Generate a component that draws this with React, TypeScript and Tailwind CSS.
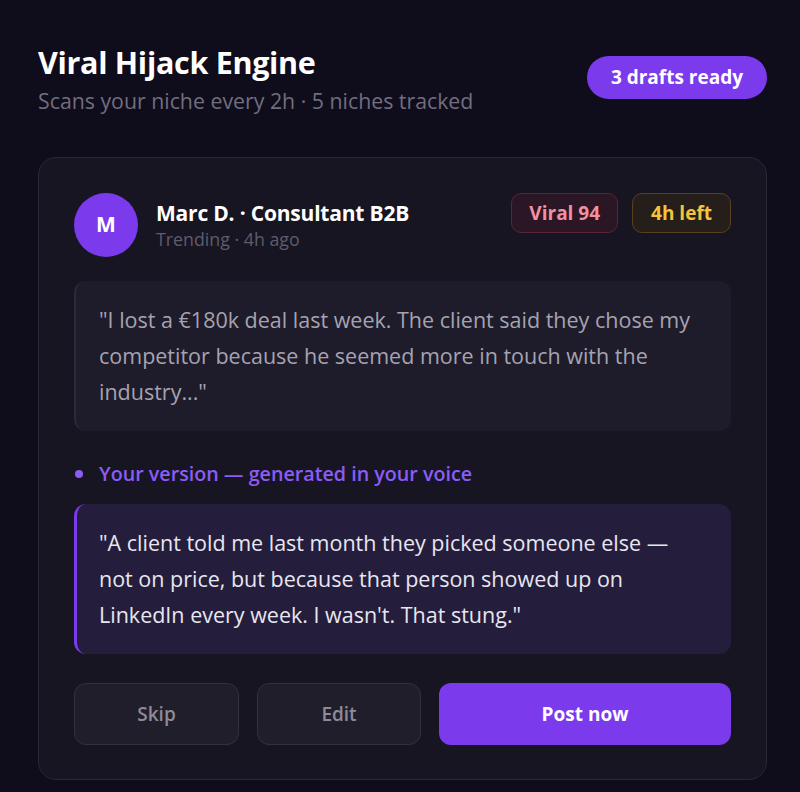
export default function App() {
  return (
    <div className="min-h-[792px] bg-[#0f0c1c] pl-[38px] pr-[33px] pt-[44px] pb-[12px] text-white" style={{ fontFamily: '"Open Sans", "Noto Sans", sans-serif' }}>
      <div className="flex items-start justify-between">
        <div>
          <h1 className="text-[30.5px] font-bold leading-[36px] tracking-[-0.3px]">Viral Hijack Engine</h1>
          <p className="mt-[7px] text-[21.3px] leading-[28px] text-[#716e7e]">Scans your niche every 2h · 5 niches tracked</p>
        </div>
        <div className="mt-[12px] flex h-[43px] items-center rounded-full bg-[#7c3aed] px-[24px] text-[19px] font-bold">3 drafts ready</div>
      </div>

      <div className="mt-[42px] rounded-[18px] border border-[#2a2736] bg-[#171522] px-[35px] pt-[35px] pb-[34px]">
        <div className="flex items-center">
          <div className="flex h-[64px] w-[64px] items-center justify-center rounded-full bg-[#7c3aed] text-[21px] font-bold">M</div>
          <div className="ml-[18px] flex-1">
            <div className="text-[21px] font-bold leading-[28px] tracking-[-0.2px]">Marc D. · Consultant B2B</div>
            <div className="text-[17.8px] leading-[24px] text-[#5f5c6c]">Trending · 4h ago</div>
          </div>
          <div className="flex gap-[14px] self-start">
            <span className="flex h-[40px] items-center rounded-[10px] border border-[#5a2534] bg-[#2a1624] px-[17px] text-[19px] font-bold text-[#f2909f]">Viral 94</span>
            <span className="flex h-[40px] items-center rounded-[10px] border border-[#59411d] bg-[#251e1a] px-[18px] text-[19px] font-bold text-[#f4c53c]">4h left</span>
          </div>
        </div>

        <div className="mt-[24px] rounded-[12px] border-l-[2px] border-[#2c2939] bg-[#1e1b2a] py-[21px] pl-[23px] pr-[24px] text-[21.5px] leading-[36px] text-[#a6a3b1]">
          "I lost a €180k deal last week. The client said they chose my competitor because he seemed more in touch with the industry..."
        </div>

        <div className="mt-[29px] flex items-center gap-[16px] text-[19.7px] font-semibold leading-[28px] text-[#8b5cf6]">
          <span className="ml-[1px] h-[8px] w-[8px] rounded-full bg-[#8b5cf6]" />
          <span>Your version — generated in your voice</span>
        </div>

        <div className="mt-[16px] rounded-[12px] border-l-[3px] border-[#7c3aed] bg-[#241d3c] py-[21px] pl-[22px] pr-[24px] text-[21.5px] leading-[36px] text-[#e8e6f0]">
          "A client told me last month they picked someone else — not on price, but because that person showed up on LinkedIn every week. I wasn't. That stung."
        </div>

        <div className="mt-[29px] grid grid-cols-[165px_164px_1fr] gap-[18px]">
          <button className="h-[62px] rounded-[12px] border border-[#34313f] bg-[#211e2c] text-[19px] font-semibold text-[#8d8a99]">Skip</button>
          <button className="h-[62px] rounded-[12px] border border-[#34313f] bg-[#211e2c] text-[19px] font-semibold text-[#8d8a99]">Edit</button>
          <button className="h-[62px] rounded-[12px] bg-[#7c3aed] text-[19px] font-bold text-white">Post now</button>
        </div>
      </div>
    </div>
  );
}
